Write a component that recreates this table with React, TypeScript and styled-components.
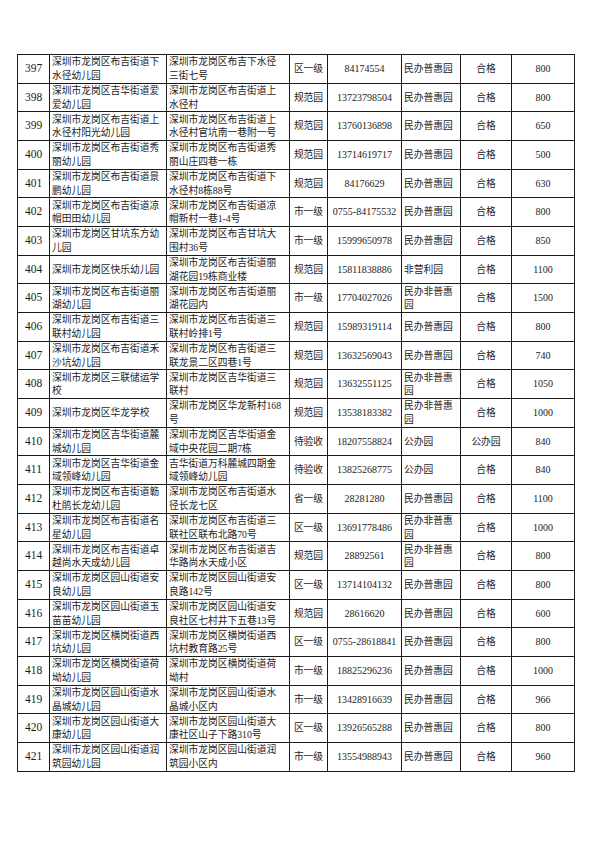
import React from 'react';
import styled, { createGlobalStyle } from 'styled-components';

const GlobalStyle = createGlobalStyle`
  html, body {
    margin: 0;
    padding: 0;
    background: #ffffff;
  }
  body {
    font-family: "Liberation Serif", "Noto Sans CJK SC", serif;
    color: #111;
  }
`;

const Page = styled.div`
  width: 595px;
  height: 841px;
  padding: 54px 0 0 17px;
  box-sizing: border-box;
`;

const Table = styled.table`
  border-collapse: collapse;
  table-layout: fixed;
  width: 557px;
`;

const Row = styled.tr`
  height: 28.68px;
`;

type Align = 'left' | 'center';

const Cell = styled.td<{ $align?: Align; $size?: number }>`
  border: 1px solid #1a1a1a;
  padding: 0 0 0 ${(p) => (p.$align === 'left' ? '2px' : '0')};
  text-align: ${(p) => p.$align || 'center'};
  vertical-align: middle;
  font-size: ${(p) => p.$size || 9.75}px;
  line-height: 13.6px;
  white-space: nowrap;
  overflow: hidden;
  color: #1c1c1c;
`;

const Num = styled.span`
  font-family: "Liberation Serif", serif;
`;

type Item = {
  no: number;
  name: string;
  addr: string;
  level: string;
  tel: string;
  kind: string;
  result: string;
  size: number;
};

const rows: Item[] = [
  { no: 397, name: '深圳市龙岗区布吉街道下|水径幼儿园', addr: '深圳市龙岗区布吉下水径|三街七号', level: '区一级', tel: '84174554', kind: '民办普惠园', result: '合格', size: 800 },
  { no: 398, name: '深圳市龙岗区吉华街道爱|爱幼儿园', addr: '深圳市龙岗区布吉街道上|水径村', level: '规范园', tel: '13723798504', kind: '民办普惠园', result: '合格', size: 800 },
  { no: 399, name: '深圳市龙岗区布吉街道上|水径村阳光幼儿园', addr: '深圳市龙岗区布吉街道上|水径村官坑南一巷附一号', level: '规范园', tel: '13760136898', kind: '民办普惠园', result: '合格', size: 650 },
  { no: 400, name: '深圳市龙岗区布吉街道秀|丽幼儿园', addr: '深圳市龙岗区布吉街道秀|丽山庄四巷一栋', level: '规范园', tel: '13714619717', kind: '民办普惠园', result: '合格', size: 500 },
  { no: 401, name: '深圳市龙岗区布吉街道景|鹏幼儿园', addr: '深圳市龙岗区布吉街道下|水径村8栋88号', level: '规范园', tel: '84176629', kind: '民办普惠园', result: '合格', size: 630 },
  { no: 402, name: '深圳市龙岗区布吉街道凉|帽田田幼儿园', addr: '深圳市龙岗区布吉街道凉|帽新村一巷1-4号', level: '市一级', tel: '0755-84175532', kind: '民办普惠园', result: '合格', size: 800 },
  { no: 403, name: '深圳市龙岗区甘坑东方幼|儿园', addr: '深圳市龙岗区布吉甘坑大|围村36号', level: '市一级', tel: '15999650978', kind: '民办普惠园', result: '合格', size: 850 },
  { no: 404, name: '深圳市龙岗区快乐幼儿园', addr: '深圳市龙岗区布吉街道丽|湖花园19栋商业楼', level: '规范园', tel: '15811838886', kind: '非营利园', result: '合格', size: 1100 },
  { no: 405, name: '深圳市龙岗区布吉街道丽|湖幼儿园', addr: '深圳市龙岗区布吉街道丽|湖花园内', level: '市一级', tel: '17704027026', kind: '民办非普惠|园', result: '合格', size: 1500 },
  { no: 406, name: '深圳市龙岗区布吉街道三|联村幼儿园', addr: '深圳市龙岗区布吉街道三|联村岭排1号', level: '规范园', tel: '15989319114', kind: '民办普惠园', result: '合格', size: 800 },
  { no: 407, name: '深圳市龙岗区布吉街道禾|沙坑幼儿园', addr: '深圳市龙岗区布吉街道三|联龙景二区四巷1号', level: '规范园', tel: '13632569043', kind: '民办普惠园', result: '合格', size: 740 },
  { no: 408, name: '深圳市龙岗区三联储运学|校', addr: '深圳市龙岗区吉华街道三|联村', level: '规范园', tel: '13632551125', kind: '民办非普惠|园', result: '合格', size: 1050 },
  { no: 409, name: '深圳市龙岗区华龙学校', addr: '深圳市龙岗区华龙新村168|号', level: '规范园', tel: '13538183382', kind: '民办非普惠|园', result: '合格', size: 1000 },
  { no: 410, name: '深圳市龙岗区吉华街道麓|城幼儿园', addr: '深圳市龙岗区吉华街道金|域中央花园二期7栋', level: '待验收', tel: '18207558824', kind: '公办园', result: '公办园', size: 840 },
  { no: 411, name: '深圳市龙岗区吉华街道金|域领峰幼儿园', addr: '吉华街道万科麓城四期金|域领峰幼儿园', level: '待验收', tel: '13825268775', kind: '公办园', result: '合格', size: 840 },
  { no: 412, name: '深圳市龙岗区布吉街道簕|杜鹃长龙幼儿园', addr: '深圳市龙岗区布吉街道水|径长龙七区', level: '省一级', tel: '28281280', kind: '民办普惠园', result: '合格', size: 1100 },
  { no: 413, name: '深圳市龙岗区布吉街道名|星幼儿园', addr: '深圳市龙岗区布吉街道三|联社区联布北路70号', level: '区一级', tel: '13691778486', kind: '民办非普惠|园', result: '合格', size: 1000 },
  { no: 414, name: '深圳市龙岗区布吉街道卓|越尚水天成幼儿园', addr: '深圳市龙岗区布吉街道吉|华路尚水天成小区', level: '规范园', tel: '28892561', kind: '民办非普惠|园', result: '合格', size: 800 },
  { no: 415, name: '深圳市龙岗区园山街道安|良幼儿园', addr: '深圳市龙岗区园山街道安|良路142号', level: '区一级', tel: '13714104132', kind: '民办普惠园', result: '合格', size: 800 },
  { no: 416, name: '深圳市龙岗区园山街道玉|苗苗幼儿园', addr: '深圳市龙岗区园山街道安|良社区七村井下五巷13号', level: '规范园', tel: '28616620', kind: '民办普惠园', result: '合格', size: 600 },
  { no: 417, name: '深圳市龙岗区横岗街道西|坑幼儿园', addr: '深圳市龙岗区横岗街道西|坑村教育路25号', level: '区一级', tel: '0755-28618841', kind: '民办普惠园', result: '合格', size: 800 },
  { no: 418, name: '深圳市龙岗区横岗街道荷|坳幼儿园', addr: '深圳市龙岗区横岗街道荷|坳村', level: '市一级', tel: '18825296236', kind: '民办普惠园', result: '合格', size: 1000 },
  { no: 419, name: '深圳市龙岗区园山街道水|晶城幼儿园', addr: '深圳市龙岗区园山街道水|晶城小区内', level: '市一级', tel: '13428916639', kind: '民办普惠园', result: '合格', size: 966 },
  { no: 420, name: '深圳市龙岗区园山街道大|康幼儿园', addr: '深圳市龙岗区园山街道大|康社区山子下路310号', level: '区一级', tel: '13926565288', kind: '民办普惠园', result: '合格', size: 800 },
  { no: 421, name: '深圳市龙岗区园山街道润|筑园幼儿园', addr: '深圳市龙岗区园山街道润|筑园小区内', level: '市一级', tel: '13554988943', kind: '民办普惠园', result: '合格', size: 960 },
];

const widths = [32, 117, 123, 38, 74, 59, 51, 63];

function Lines({ text }: { text: string }) {
  const parts = text.split('|');
  return (
    <>
      {parts.map((p, i) => (
        <React.Fragment key={i}>
          {i > 0 && <br />}
          {p}
        </React.Fragment>
      ))}
    </>
  );
}

export default function App() {
  return (
    <Page>
      <GlobalStyle />
      <Table>
        <colgroup>
          {widths.map((w, i) => (
            <col key={i} style={{ width: w }} />
          ))}
        </colgroup>
        <tbody>
          {rows.map((r) => (
            <Row key={r.no}>
              <Cell $size={11.5}><Num>{r.no}</Num></Cell>
              <Cell $align="left"><Lines text={r.name} /></Cell>
              <Cell $align="left"><Lines text={r.addr} /></Cell>
              <Cell>{r.level}</Cell>
              <Cell $size={10}><Num>{r.tel}</Num></Cell>
              <Cell $align="left"><Lines text={r.kind} /></Cell>
              <Cell>{r.result}</Cell>
              <Cell $size={10}><Num>{r.size}</Num></Cell>
            </Row>
          ))}
        </tbody>
      </Table>
    </Page>
  );
}
